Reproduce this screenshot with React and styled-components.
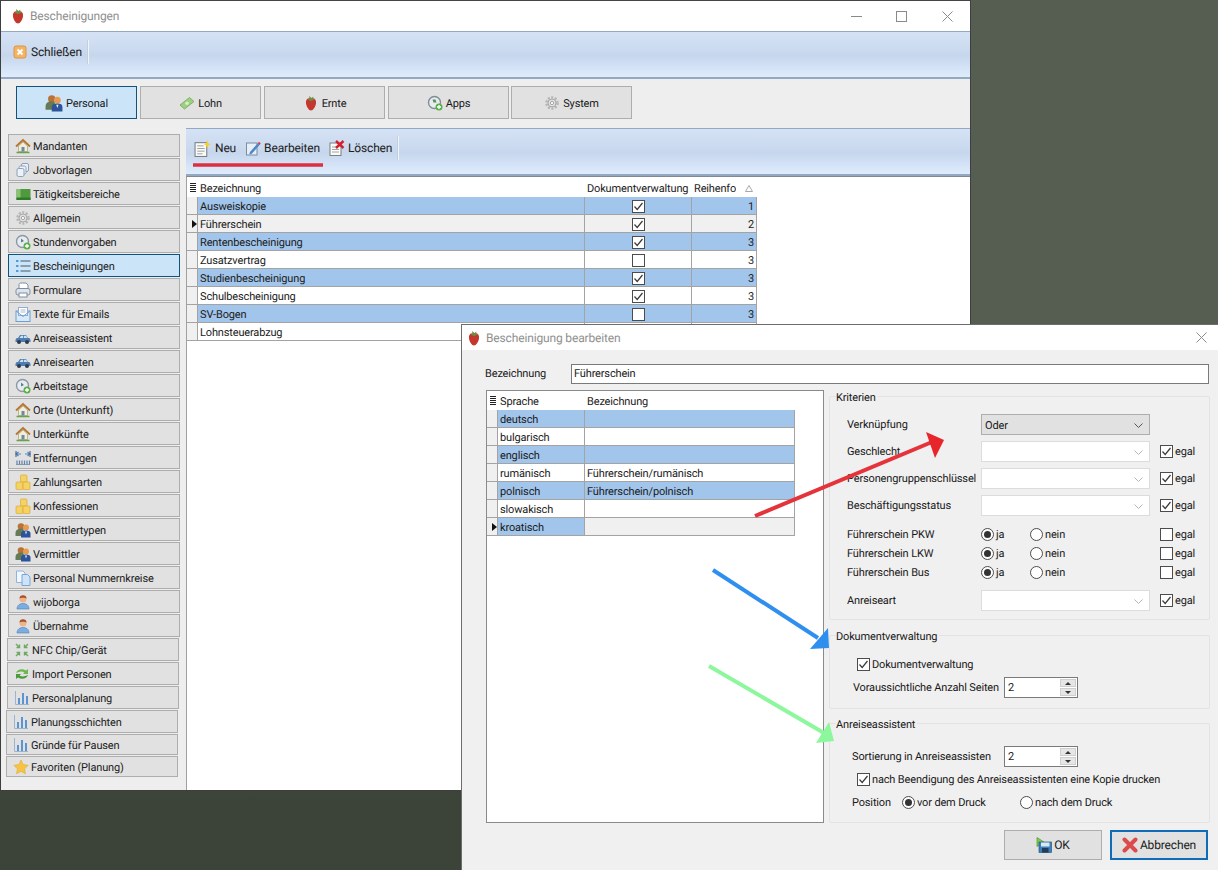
import React from "react";
import styled, { createGlobalStyle } from "styled-components";

const GlobalStyle = createGlobalStyle`
  html, body { margin: 0; padding: 0; background: #4c5548; }
  * { box-sizing: border-box; }
  body {
    font-family: Roboto, "Liberation Sans", Arial, sans-serif;
    font-size: 11px;
    letter-spacing: -0.15px;
    text-rendering: geometricPrecision;
    color: #1a1a1a;
  }
`;

/* ---------- icons ---------- */
const shapes = {
  berry: (
    <>
      <path d="M8 3.500c3.500-1 5.500 1 5 5C12.500 12 10 15.500 8 15.500S3.500 12 3 8.500c-.5-4 1.500-6 5-5z" fill="#c4372c" />
      <path d="M4.500 4.500 6.500 3.500 6 1 8.500 3 10.500 1.500 10 3.500 12 4.500 8 6z" fill="#6d8f45" />
    </>
  ),
  close: (
    <>
      <rect x="2" y="2" width="12" height="12" rx="2" fill="#f3b565" stroke="#dd9440" />
      <path d="M5.500 5.500l5 5m0-5l-5 5" stroke="#fff" strokeWidth="1.800" />
    </>
  ),
  house: (
    <>
      <path d="M1 8.500 8 2l7 6.500" fill="none" stroke="#b8742c" strokeWidth="1.800" />
      <path d="M3.500 8 8 4l4.500 4v5.500h-9z" fill="#f2ecd8" stroke="#8a9a6c" strokeWidth=".6" />
      <rect x="6.500" y="9" width="3" height="4.500" fill="#6f8aa8" />
      <path d="M1.500 14.500h13" stroke="#6aa04a" strokeWidth="1.500" />
    </>
  ),
  layers: (
    <g fill="#eef2f7" stroke="#8aa0bd">
      <rect x="6.500" y="1.500" width="7" height="8" rx="1.500" />
      <rect x="4" y="4" width="7" height="8" rx="1.500" />
      <rect x="2" y="6.500" width="7" height="8" rx="1.500" />
    </g>
  ),
  block: (
    <>
      <rect x="1.500" y="3" width="14" height="11" fill="#4f9a3e" />
      <rect x="1.500" y="3" width="4" height="11" fill="#8cc072" />
      <rect x="1.500" y="11.500" width="14" height="2.500" fill="#2f7a2a" />
    </>
  ),
  gear: (
    <>
      <circle cx="8" cy="8" r="5.500" fill="none" stroke="#b5b5b5" strokeWidth="2.500" strokeDasharray="2 1.500" />
      <circle cx="8" cy="8" r="4" fill="#e2e2e2" stroke="#a8a8a8" />
      <circle cx="8" cy="8" r="1.700" fill="#f4f4f4" stroke="#a8a8a8" />
    </>
  ),
  clock: (
    <>
      <circle cx="7.500" cy="7.500" r="6" fill="#e8ecef" stroke="#8b98a5" strokeWidth="1.400" />
      <path d="M6 4.500v4l3-1.500z" fill="#5a7f99" />
      <circle cx="12" cy="12" r="3.500" fill="#5cae4a" />
      <path d="M10 12h4m-2-2v4" stroke="#fff" strokeWidth="1.300" />
    </>
  ),
  list: (
    <>
      <path d="M5.500 3h10M5.500 8h10M5.500 13h10" stroke="#44586c" strokeWidth="1.200" />
      <path d="M1 3h2.500M1 8h2.500M1 13h2.500" stroke="#4e9be0" strokeWidth="2" />
    </>
  ),
  printer: (
    <>
      <path d="M4 7V2.500C4 1.500 5 1 6 1h5l2 2v4" fill="#fff" stroke="#7d8ea3" />
      <rect x="1" y="6.500" width="14" height="6.500" rx="2" fill="#dfe4ea" stroke="#7d8ea3" />
      <rect x="4" y="11" width="8" height="4" fill="#fff" stroke="#7d8ea3" />
    </>
  ),
  mail: (
    <>
      <rect x="1" y="5" width="14" height="10.500" fill="#d8e9fa" stroke="#6f9fd0" />
      <rect x="3.500" y="1.500" width="9" height="8" fill="#fff" stroke="#8fb0d4" />
      <path d="M5.500 4h5M5.500 6h5" stroke="#9ab" strokeWidth=".8" />
      <path d="M1 5 8 10.500 15 5" fill="none" stroke="#6f9fd0" />
    </>
  ),
  car: (
    <>
      <path d="M.5 10.500c0-2 1-2.500 2.500-2.500l2-3h6l2 3c1.500 0 2.500 .5 2.500 2.500v1.500H.5z" fill="#4d7cb0" />
      <path d="M6 5.800h2.200V8H4.500zM9 5.800h2L12.500 8H9z" fill="#cfe2f5" />
      <circle cx="4" cy="12" r="2" fill="#2e3a48" />
      <circle cx="12" cy="12" r="2" fill="#2e3a48" />
    </>
  ),
  ruler: (
    <>
      <path d="M1 4h5M3.500 2 1 4l2.500 2M15 4h-5M12.500 2 15 4l-2.500 2" fill="none" stroke="#4a86c5" strokeWidth="1.200" />
      <path d="M1 1v6M15 1v6" stroke="#44586c" />
      <path d="M1 14.500h14" stroke="#8c9cb0" />
      <path d="M2 10.500v4M4.500 10.500v4M7 10.500v4M9.500 10.500v4M12 10.500v4M14.500 10.500v4" stroke="#5f84ad" strokeWidth="1.200" />
    </>
  ),
  coins: (
    <g fill="#f5d264" stroke="#dcab35" strokeWidth=".7">
      <rect x="5.500" y="1" width="6.500" height="7" rx="1" />
      <rect x="1" y="8" width="7" height="7.500" rx="1" />
      <rect x="8" y="8" width="7" height="7.500" rx="1" />
    </g>
  ),
  people: (
    <>
      <circle cx="6" cy="4.500" r="3.300" fill="#b87438" />
      <circle cx="11" cy="5.500" r="3" fill="#e89c4d" />
      <path d="M.5 11c0-3 2.500-4.500 5.500-4.500S9 8 9 11v3H.5z" fill="#667a55" />
      <path d="M6 15.500v-4C6 9.500 8 8.500 11 8.500s4.500 1 4.500 3v4z" fill="#2b549c" />
      <path d="M10 9.500h2l-1 3z" fill="#f2f2f2" />
    </>
  ),
  pages: (
    <>
      <path d="M1.500 1h6.500l2 2v9.500H1.500z" fill="#f2f7fd" stroke="#8fb4dc" />
      <path d="M7 4.500h5.500l2.500 2.500v8.500H7z" fill="#cfe3f8" stroke="#7ba6d4" />
    </>
  ),
  user: (
    <>
      <circle cx="8" cy="5" r="3.500" fill="#f0b48a" />
      <path d="M4.500 4.500C4.500 2 6 1.300 8 1.300s3.500 .7 3.500 3.200C10 3.500 6 3.500 4.500 4.500z" fill="#a5532b" />
      <path d="M2 15c0-3.500 2.500-5.500 6-5.500s6 2 6 5.500z" fill="#7aaee0" stroke="#4f82b8" strokeWidth=".6" />
    </>
  ),
  nfc: (
    <path d="M2 2l3.500 3.500M5.500 2.500v3h-3M14 2l-3.500 3.500M10.500 2.500v3h3M2 14l3.500-3.500M5.500 13.500v-3h-3M14 14l-3.500-3.500M10.500 13.500v-3h3" fill="none" stroke="#6fa860" strokeWidth="1.400" />
  ),
  sync: (
    <>
      <path d="M2 7c1-3.500 6-5 10-2.500L14 3v5H9l1.500-1.500C8 5 5 5.500 2 7z" fill="#6cb84f" />
      <path d="M14 9c-1 3.500-6 5-10 2.500L2 13V8h5L5.500 9.500C8 11 11 10.500 14 9z" fill="#4c9a3e" />
    </>
  ),
  chart: (
    <>
      <path d="M1.500 1v13.500H15" fill="none" stroke="#9db4cf" />
      <rect x="4" y="8" width="2" height="6" fill="#5b93d3" />
      <rect x="8" y="3" width="2" height="11" fill="#5b93d3" />
      <rect x="12" y="6" width="2" height="8" fill="#5b93d3" />
    </>
  ),
  star: <path d="M8 1l2.200 4.600 5 .7-3.600 3.500.9 5L8 12.400 3.500 14.800l.9-5L.8 6.300l5-.7z" fill="#f6c342" stroke="#dca52c" strokeWidth=".5" />,
  neu: (
    <>
      <rect x="1" y="2.500" width="11" height="13" fill="#fbfbf6" stroke="#7a8088" />
      <path d="M3 5.500h6M3 8h7M3 10.500h7M3 13h5" stroke="#8a929c" strokeWidth=".8" />
      <path d="M12.500 0l1 3 2.500 1-2.500 1-1 3-1-3-2.500-1 2.500-1z" fill="#f7d02e" />
    </>
  ),
  edit: (
    <>
      <rect x="1.500" y="3" width="10.500" height="12" fill="#e6eef8" stroke="#7b8ca3" />
      <path d="M5 12l-.8 2.500L6.800 13.700 14.500 5 12.800 3.300z" fill="#4f86c6" />
      <path d="M12.800 3.300l1.200-1.500 1.700 1.700L14.500 5z" fill="#d83a3a" />
    </>
  ),
  del: (
    <>
      <rect x="1" y="3" width="11" height="12.500" fill="#fbfbf6" stroke="#7a8088" />
      <path d="M3 7h6M3 9.500h7M3 12h7" stroke="#8a929c" strokeWidth=".8" />
      <path d="M7 1l7.500 7m0-7L7 8" stroke="#d4202c" strokeWidth="2.400" />
    </>
  ),
  money: (
    <>
      <path d="M1 10 10.500 2.500 15 6.500 5.500 14z" fill="#9ccf7e" stroke="#6fa85a" strokeWidth=".8" />
      <circle cx="8" cy="8.200" r="1.800" fill="#d6efc4" />
    </>
  ),
  apps: (
    <>
      <circle cx="7.500" cy="7.500" r="6" fill="#e8ecef" stroke="#7f8d9a" strokeWidth="1.400" />
      <path d="M5.500 4.500h3l1 3h-3z" fill="#5b8f5a" />
      <circle cx="12" cy="12" r="3.500" fill="#5cae4a" />
      <path d="M10 12h4m-2-2v4" stroke="#fff" strokeWidth="1.300" />
    </>
  ),
  disk: (
    <>
      <path d="M1 .5v9l7-4.500z" fill="#7ecb4c" stroke="#4f9a33" strokeWidth=".7" />
      <rect x="3" y="5" width="12.500" height="10.500" fill="#3f7fb5" stroke="#265a88" strokeWidth=".7" />
      <rect x="5" y="5.500" width="8.500" height="4" fill="#dbe8f3" />
      <rect x="6" y="11" width="6.500" height="4.500" fill="#1f3d5c" />
    </>
  ),
  cancel: <path d="M2.500 2.500 13.500 13.500M13.500 2.500 2.500 13.500" stroke="#dc4a4a" strokeWidth="4" strokeLinecap="round" />,
};

const Glyph = styled.svg`
  flex: none;
  width: ${(p) => p.$size || 16}px;
  height: ${(p) => p.$size || 16}px;
`;

const Icon = ({ name, size }) => (
  <Glyph viewBox="0 0 16 16" $size={size}>
    {shapes[name]}
  </Glyph>
);

/* ---------- desktop and windows ---------- */
const Desktop = styled.div`
  position: relative;
  width: 1218px;
  height: 870px;
  overflow: hidden;
  background: linear-gradient(#555e50 0%, #555e50 45%, #3c443a 92%);
`;

const MainWindow = styled.div`
  position: absolute;
  left: 0;
  top: 0;
  width: 971px;
  height: 791px;
  border: 1px solid #3e3e3e;
  border-top-color: #444;
  background: #eeeeee;
  display: flex;
  flex-direction: column;
`;

const DialogWindow = styled.div`
  position: absolute;
  left: 461px;
  top: 324px;
  width: 760px;
  height: 550px;
  border: 1px solid #6d6d6d;
  background: #f0f0f0;
  display: flex;
  flex-direction: column;
`;

const TitleBar = styled.div`
  flex: none;
  height: ${(p) => p.$h}px;
  background: #fff;
  display: flex;
  align-items: center;
  padding-left: ${(p) => p.$pad}px;
  gap: 4px;
`;

const TitleText = styled.span`
  font-size: 12px;
  color: #8f8f8f;
  flex: 1;
`;

const WinButton = styled.svg`
  flex: none;
  width: 11px;
  height: 11px;
  margin-right: ${(p) => p.$gap}px;
  stroke: #8a8a8a;
  fill: none;
`;

const ToolBar = styled.div`
  flex: none;
  height: 48px;
  display: flex;
  align-items: flex-start;
  padding: ${(p) => p.$pt}px 0 0 ${(p) => p.$pl}px;
  gap: 9px;
  border-top: 1px solid #93a9c1;
  border-bottom: 2px solid #93a9c1;
  background: linear-gradient(#d5e2f5 0%, #cbdaef 40%, #c6d6ec 52%, #deecfd 100%);
`;

const ToolButton = styled.div`
  display: flex;
  align-items: center;
  gap: ${(p) => p.$gap || 4}px;
  height: 24px;
  font-size: 12px;
  color: #202020;
`;

const ToolSep = styled.div`
  width: 1px;
  height: 24px;
  margin-left: -4px;
  background: #c2cfe0;
  box-shadow: 1px 0 0 #eef4fb;
`;

const TabRow = styled.div`
  flex: none;
  display: flex;
  gap: 3px;
  padding: 7px 0 0 15px;
  height: 48px;
`;

const Tab = styled.div`
  width: 121px;
  height: 33px;
  padding-top: 1px;
  display: flex;
  align-items: center;
  justify-content: center;
  gap: 3px;
  border: 1px solid ${(p) => (p.$active ? "#10537f" : "#adadad")};
  background: ${(p) => (p.$active ? "#cce4f7" : "#e1e1e1")};
  &:last-child {
    margin-left: -1px;
  }
`;

const Work = styled.div`
  flex: 1;
  display: flex;
  min-height: 0;
`;

const SideBar = styled.div`
  flex: none;
  width: 185px;
  padding: 7px 0 0 7px;
  display: flex;
  flex-direction: column;
  gap: 1px;
`;

const SideGroup = styled.div`
  margin-left: ${(p) => p.$shift || 0}px;
  display: flex;
  flex-direction: column;
  gap: 1px;
`;

const SideItem = styled.div`
  width: 172px;
  height: ${(p) => p.$h || 23}px;
  padding: 1px 0 0 6px;
  display: flex;
  align-items: center;
  gap: 2px;
  white-space: nowrap;
  color: #222;
  border: 1px solid ${(p) => (p.$active ? "#10537f" : "#adadad")};
  background: ${(p) => (p.$active ? "#cce4f7" : "#e1e1e1")};
`;

const Pane = styled.div`
  flex: 1;
  display: flex;
  flex-direction: column;
  margin-top: 1px;
`;

const GridArea = styled.div`
  flex: 1;
  padding-top: 1px;
  background: #fff;
  border-left: 1px solid #a0a0a0;
  border-top: 1px solid #7f8a96;
`;

const Row = styled.div`
  display: grid;
  grid-template-columns: ${(p) => p.$cols};
  width: ${(p) => p.$width}px;
  height: ${(p) => p.$h || 18}px;
  border-bottom: ${(p) => (p.$head ? "none" : "1px solid #a3a3a3")};
`;

const Cell = styled.div`
  display: flex;
  align-items: center;
  justify-content: ${(p) => (p.$center ? "center" : p.$right ? "flex-end" : "flex-start")};
  padding: 1px 2px 0;
  overflow: hidden;
  white-space: nowrap;
  border-right: ${(p) => (p.$head ? "none" : "1px solid #a3a3a3")};
  background: ${(p) => (p.$head ? "#fff" : p.$bg)};
  color: #1c1c1c;
`;

const Indicator = styled.div`
  display: flex;
  align-items: center;
  justify-content: center;
  background: ${(p) => (p.$head ? "#fff" : "#f0f0f0")};
  border-right: ${(p) => (p.$head ? "none" : "1px solid #a3a3a3")};
`;

const RowMarker = styled.span`
  width: 0;
  height: 0;
  margin-left: 4px;
  border-top: 4.5px solid transparent;
  border-bottom: 4.5px solid transparent;
  border-left: 5px solid #111;
`;

const HeadLines = styled.span`
  width: 6px;
  height: 9px;
  background: repeating-linear-gradient(#222 0 1px, #fff 1px 2px);
  border-left: 1px dotted #222;
`;

const HeadClip = styled.span`
  overflow: hidden;
  width: 42px;
  flex: none;
`;

const SortMark = styled.svg`
  flex: none;
  width: 8px;
  height: 7px;
  margin-left: 9px;
  fill: #fff;
  stroke: #a8a8a8;
`;

const Box = styled.span`
  flex: none;
  width: 13px;
  height: 13px;
  display: inline-flex;
  align-items: center;
  justify-content: center;
  background: #fff;
  border: 1px solid #4c4c4c;
`;

const BoxTick = styled.svg`
  width: 11px;
  height: 11px;
  fill: none;
  stroke: #3a3a3a;
  stroke-width: 1.200;
`;

const Check = ({ on }) => (
  <Box>
    {on && (
      <BoxTick viewBox="0 0 11 11">
        <path d="M1.500 5.500 4.200 8.500 9.500 2" />
      </BoxTick>
    )}
  </Box>
);

const RadioRing = styled.span`
  flex: none;
  width: 13px;
  height: 13px;
  border-radius: 50%;
  display: inline-flex;
  align-items: center;
  justify-content: center;
  background: #fff;
  border: 1px solid #4c4c4c;
`;

const RadioDot = styled.span`
  width: 7px;
  height: 7px;
  border-radius: 50%;
  background: #333;
`;

const Radio = ({ on }) => <RadioRing>{on && <RadioDot />}</RadioRing>;

/* ---------- dialog parts ---------- */
const NameRow = styled.div`
  flex: none;
  height: 19px;
  margin: 14px 0 0 23px;
  display: flex;
  align-items: center;
`;

const NameLabel = styled.span`
  width: 86px;
`;

const TextInput = styled.div`
  width: 638px;
  height: 20px;
  padding-left: 2px;
  display: flex;
  align-items: center;
  background: #fff;
  border: 1px solid #7a7a7a;
`;

const DialogBody = styled.div`
  flex: none;
  display: flex;
  margin: 7px 0 0 24px;
`;

const LangGrid = styled.div`
  width: 338px;
  height: 433px;
  background: #fff;
  border: 1px solid #8a8a8a;
`;

const GroupColumn = styled.div`
  width: 381px;
  margin-left: 5px;
  padding-top: 6px;
  display: flex;
  flex-direction: column;
`;

const Group = styled.div`
  position: relative;
  height: ${(p) => p.$h}px;
  margin-bottom: ${(p) => p.$mb || 0}px;
  padding: ${(p) => p.$pt}px 0 0 ${(p) => p.$pl}px;
  border: 1px solid #e3e3e3;
  border-radius: 2px;
`;

const GroupTitle = styled.span`
  position: absolute;
  left: 6px;
  top: -6px;
  padding-right: 2px;
  background: #f0f0f0;
`;

const FormRow = styled.div`
  display: grid;
  grid-template-columns: 134px 169px 10px auto;
  align-items: center;
  height: ${(p) => p.$h || 21}px;
  margin-bottom: ${(p) => p.$mb ?? 6}px;
`;

const Select = styled.div`
  grid-column: 2;
  height: 21px;
  display: flex;
  align-items: center;
  justify-content: space-between;
  padding: 1px 6px 0 3px;
  border: 1px solid ${(p) => (p.$filled ? "#adadad" : "#dcdcdc")};
  background: ${(p) => (p.$filled ? "#e1e1e1" : "#fff")};
`;

const Chevron = styled.svg`
  width: 9px;
  height: 5px;
  fill: none;
  stroke: ${(p) => (p.$filled ? "#555" : "#b5b5b5")};
`;

const Egal = styled.div`
  grid-column: 4;
  display: flex;
  align-items: center;
  gap: 2px;
`;

const RadioPair = styled.div`
  grid-column: 2;
  display: flex;
  align-items: center;
`;

const RadioOption = styled.div`
  display: flex;
  align-items: center;
  gap: ${(p) => p.$gap || 2}px;
  width: ${(p) => p.$w}px;
  flex: none;
`;

const CheckLine = styled.div`
  display: flex;
  align-items: center;
  gap: 2px;
  height: 16px;
  margin-left: ${(p) => p.$ml}px;
  margin-bottom: ${(p) => p.$mb || 0}px;
`;

const SpinLine = styled.div`
  display: flex;
  align-items: center;
  height: 21px;
  margin-bottom: ${(p) => p.$mb || 0}px;
`;

const SpinLabel = styled.span`
  width: ${(p) => p.$w}px;
  flex: none;
`;

const Spinner = styled.div`
  width: 74px;
  height: 21px;
  display: flex;
  align-items: center;
  justify-content: space-between;
  padding: 0 1px 0 3px;
  background: #fff;
  border: 1px solid #7a7a7a;
`;

const SpinButtons = styled.div`
  width: 16px;
  height: 17px;
  display: flex;
  flex-direction: column;
  gap: 1px;
`;

const SpinButton = styled.div`
  flex: 1;
  display: flex;
  align-items: center;
  justify-content: center;
  background: #e6e6e6;
  border: 1px solid #cfcfcf;
  &::after {
    content: "";
    border-left: 3px solid transparent;
    border-right: 3px solid transparent;
    ${(p) => (p.$up ? "border-bottom: 3px solid #333;" : "border-top: 3px solid #333;")}
  }
`;

const PositionLine = styled.div`
  display: flex;
  align-items: center;
  height: 16px;
`;

const Footer = styled.div`
  flex: none;
  display: flex;
  gap: 8px;
  margin: 7px 0 0 542px;
`;

const DialogButton = styled.div`
  width: 98px;
  height: 30px;
  display: flex;
  align-items: center;
  justify-content: center;
  gap: 2px;
  font-size: 12px;
  border: ${(p) => (p.$focus ? "2px solid #0f6cb8" : "1px solid #adadad")};
  background: #e1e1e1;
`;

const Annotations = styled.svg`
  position: absolute;
  left: 0;
  top: 0;
  width: 1218px;
  height: 870px;
  pointer-events: none;
`;

/* ---------- data ---------- */
const sideTop = [
  ["house", "Mandanten"],
  ["layers", "Jobvorlagen"],
  ["block", "Tätigkeitsbereiche"],
  ["gear", "Allgemein"],
  ["clock", "Stundenvorgaben"],
  ["list", "Bescheinigungen", true],
  ["printer", "Formulare"],
  ["mail", "Texte für Emails"],
  ["car", "Anreiseassistent"],
  ["car", "Anreisearten"],
  ["clock", "Arbeitstage"],
  ["house", "Orte (Unterkunft)"],
  ["house", "Unterkünfte"],
  ["ruler", "Entfernungen"],
  ["coins", "Zahlungsarten"],
  ["coins", "Konfessionen"],
  ["people", "Vermittlertypen"],
  ["people", "Vermittler"],
  ["pages", "Personal Nummernkreise"],
  ["user", "wijoborga"],
  ["user", "Übernahme"],
];

const sideMiddle = [
  ["nfc", "NFC Chip/Gerät"],
  ["sync", "Import Personen"],
  ["chart", "Personalplanung"],
];

const sideBottom = [
  ["chart", "Planungsschichten", 23],
  ["chart", "Gründe für Pausen", 21],
  ["star", "Favoriten (Planung)", 21],
];

const tabs = [
  ["people", "Personal", true],
  ["money", "Lohn"],
  ["berry", "Ernte"],
  ["apps", "Apps"],
  ["gear", "System"],
];

const certificates = [
  ["Ausweiskopie", true, 1],
  ["Führerschein", true, 2],
  ["Rentenbescheinigung", true, 3],
  ["Zusatzvertrag", false, 3],
  ["Studienbescheinigung", true, 3],
  ["Schulbescheinigung", true, 3],
  ["SV-Bogen", false, 3],
  ["Lohnsteuerabzug", false, 3],
];

const languages = [
  ["deutsch", ""],
  ["bulgarisch", ""],
  ["englisch", ""],
  ["rumänisch", "Führerschein/rumänisch"],
  ["polnisch", "Führerschein/polnisch"],
  ["slowakisch", ""],
  ["kroatisch", ""],
];

const BLUE = "#a2c5eb";
const GREY = "#f0f0f0";
const certCols = "11px 387px 107px 65px";
const langCols = "11px 87px 210px";

const selectRows = ["Geschlecht", "Personengruppenschlüssel", "Beschäftigungsstatus"];
const licenceRows = ["Führerschein PKW", "Führerschein LKW", "Führerschein Bus"];

const ChevronDown = ({ filled }) => (
  <Chevron viewBox="0 0 9 5" $filled={filled}>
    <path d="M.5 .5 4.500 4.500 8.500 .5" />
  </Chevron>
);

const Spin = ({ value }) => (
  <Spinner>
    {value}
    <SpinButtons>
      <SpinButton $up />
      <SpinButton />
    </SpinButtons>
  </Spinner>
);

const SideEntries = ({ items }) =>
  items.map(([icon, label, extra]) => (
    <SideItem key={label} $active={extra === true} $h={typeof extra === "number" ? extra : undefined}>
      <Icon name={icon} />
      {label}
    </SideItem>
  ));

const App = () => (
  <>
    <GlobalStyle />
    <Desktop>
      <MainWindow>
        <TitleBar $h={30} $pad={9}>
          <Icon name="berry" />
          <TitleText>Bescheinigungen</TitleText>
          <WinButton viewBox="0 0 11 11" $gap={30}>
            <path d="M0 5.500h11" />
          </WinButton>
          <WinButton viewBox="0 0 11 11" $gap={31}>
            <rect x=".5" y=".5" width="10" height="10" />
          </WinButton>
          <WinButton viewBox="0 0 11 11" $gap={17}>
            <path d="M.5 .5l10 10m0-10l-10 10" />
          </WinButton>
        </TitleBar>
        <ToolBar $pt={8} $pl={11}>
          <ToolButton $gap={3}>
            <Icon name="close" />
            Schließen
          </ToolButton>
          <ToolSep />
        </ToolBar>
        <TabRow>
          {tabs.map(([icon, label, active]) => (
            <Tab key={label} $active={active}>
              <Icon name={icon} size={label === "Personal" ? 18 : 16} />
              {label}
            </Tab>
          ))}
        </TabRow>
        <Work>
          <SideBar>
            <SideGroup>
              <SideEntries items={sideTop} />
            </SideGroup>
            <SideGroup $shift={-1}>
              <SideEntries items={sideMiddle} />
            </SideGroup>
            <SideGroup $shift={-2}>
              <SideEntries items={sideBottom} />
            </SideGroup>
          </SideBar>
          <Pane>
            <ToolBar $pt={7} $pl={8}>
              <ToolButton $gap={4}>
                <Icon name="neu" size={17} />
                Neu
              </ToolButton>
              <ToolButton $gap={3}>
                <Icon name="edit" />
                Bearbeiten
              </ToolButton>
              <ToolButton $gap={3}>
                <Icon name="del" />
                Löschen
              </ToolButton>
              <ToolSep />
            </ToolBar>
            <GridArea>
              <Row $cols={certCols} $width={570} $h={19} $head>
                <Indicator $head>
                  <HeadLines />
                </Indicator>
                <Cell $head>Bezeichnung</Cell>
                <Cell $head>Dokumentverwaltung</Cell>
                <Cell $head>
                  <HeadClip>Reihenfolge</HeadClip>
                  <SortMark viewBox="0 0 8 7">
                    <path d="M4 .5 7.500 6.500H.5z" />
                  </SortMark>
                </Cell>
              </Row>
              {certificates.map(([name, docs, order], i) => {
                const bg = i % 2 === 0 ? BLUE : i === 1 ? GREY : "#fff";
                return (
                  <Row key={name} $cols={certCols} $width={570}>
                    <Indicator>{i === 1 && <RowMarker />}</Indicator>
                    <Cell $bg={bg}>{name}</Cell>
                    <Cell $bg={bg} $center>
                      <Check on={docs} />
                    </Cell>
                    <Cell $bg={bg} $right>
                      {order}
                    </Cell>
                  </Row>
                );
              })}
            </GridArea>
          </Pane>
        </Work>
      </MainWindow>

      <DialogWindow>
        <TitleBar $h={25} $pad={4}>
          <Icon name="berry" />
          <TitleText>Bescheinigung bearbeiten</TitleText>
          <WinButton viewBox="0 0 11 11" $gap={13}>
            <path d="M.5 .5l10 10m0-10l-10 10" />
          </WinButton>
        </TitleBar>
        <NameRow>
          <NameLabel>Bezeichnung</NameLabel>
          <TextInput>Führerschein</TextInput>
        </NameRow>
        <DialogBody>
          <LangGrid>
            <Row $cols={langCols} $width={308} $h={19} $head>
              <Indicator $head>
                <HeadLines />
              </Indicator>
              <Cell $head>Sprache</Cell>
              <Cell $head>Bezeichnung</Cell>
            </Row>
            {languages.map(([lang, text], i) => {
              const bg = i % 2 === 0 ? BLUE : "#fff";
              const last = i === languages.length - 1;
              return (
                <Row key={lang} $cols={langCols} $width={308}>
                  <Indicator>{last && <RowMarker />}</Indicator>
                  <Cell $bg={bg}>{lang}</Cell>
                  <Cell $bg={last ? GREY : bg}>{text}</Cell>
                </Row>
              );
            })}
          </LangGrid>
          <GroupColumn>
            <Group $h={224} $mb={15} $pt={17} $pl={17}>
              <GroupTitle>Kriterien</GroupTitle>
              <FormRow>
                <span>Verknüpfung</span>
                <Select $filled>
                  Oder
                  <ChevronDown filled />
                </Select>
              </FormRow>
              {selectRows.map((label) => (
                <FormRow key={label}>
                  <span>{label}</span>
                  <Select>
                    <span />
                    <ChevronDown />
                  </Select>
                  <Egal>
                    <Check on />
                    egal
                  </Egal>
                </FormRow>
              ))}
              <FormRow $h={3} $mb={0} />
              {licenceRows.map((label) => (
                <FormRow key={label} $h={19} $mb={0}>
                  <span>{label}</span>
                  <RadioPair>
                    <RadioOption $w={49}>
                      <Radio on />
                      ja
                    </RadioOption>
                    <RadioOption $w={60}>
                      <Radio />
                      nein
                    </RadioOption>
                  </RadioPair>
                  <Egal>
                    <Check />
                    egal
                  </Egal>
                </FormRow>
              ))}
              <FormRow $h={8} $mb={0} />
              <FormRow $mb={0}>
                <span>Anreiseart</span>
                <Select>
                  <span />
                  <ChevronDown />
                </Select>
                <Egal>
                  <Check on />
                  egal
                </Egal>
              </FormRow>
            </Group>
            <Group $h={74} $mb={14} $pt={20} $pl={23}>
              <GroupTitle>Dokumentverwaltung</GroupTitle>
              <CheckLine $ml={4} $mb={5}>
                <Check on />
                Dokumentverwaltung
              </CheckLine>
              <SpinLine>
                <SpinLabel $w={151}>Voraussichtliche Anzahl Seiten</SpinLabel>
                <Spin value="2" />
              </SpinLine>
            </Group>
            <Group $h={100} $pt={22} $pl={22}>
              <GroupTitle>Anreiseassistent</GroupTitle>
              <SpinLine $mb={4}>
                <SpinLabel $w={152}>Sortierung in Anreiseassisten</SpinLabel>
                <Spin value="2" />
              </SpinLine>
              <CheckLine $ml={5} $mb={7}>
                <Check on />
                nach Beendigung des Anreiseassistenten eine Kopie drucken
              </CheckLine>
              <PositionLine>
                <SpinLabel $w={50}>Position</SpinLabel>
                <RadioOption $w={118}>
                  <Radio on />
                  vor dem Druck
                </RadioOption>
                <RadioOption $w={100}>
                  <Radio />
                  nach dem Druck
                </RadioOption>
              </PositionLine>
            </Group>
          </GroupColumn>
        </DialogBody>
        <Footer>
          <DialogButton>
            <Icon name="disk" />
            OK
          </DialogButton>
          <DialogButton $focus>
            <Icon name="cancel" />
            Abbrechen
          </DialogButton>
        </Footer>
      </DialogWindow>

      <Annotations viewBox="0 0 1218 870">
        <path d="M193 165h130" stroke="#dc2f3f" strokeWidth="3.500" />
        <path d="M755 516 932 442" stroke="#e5333b" strokeWidth="4" />
        <path d="M926 432 944 440 935 458z" fill="#e8252b" />
        <path d="M713 570 818 638" stroke="#2f8fef" strokeWidth="4" />
        <path d="M828 628 829 648 810 649z" fill="#2f8fef" />
        <path d="M709 666 824 733" stroke="#8cf79c" strokeWidth="4" />
        <path d="M829 722 834 741 816 743z" fill="#8cf79c" />
      </Annotations>
    </Desktop>
  </>
);

export default App;
